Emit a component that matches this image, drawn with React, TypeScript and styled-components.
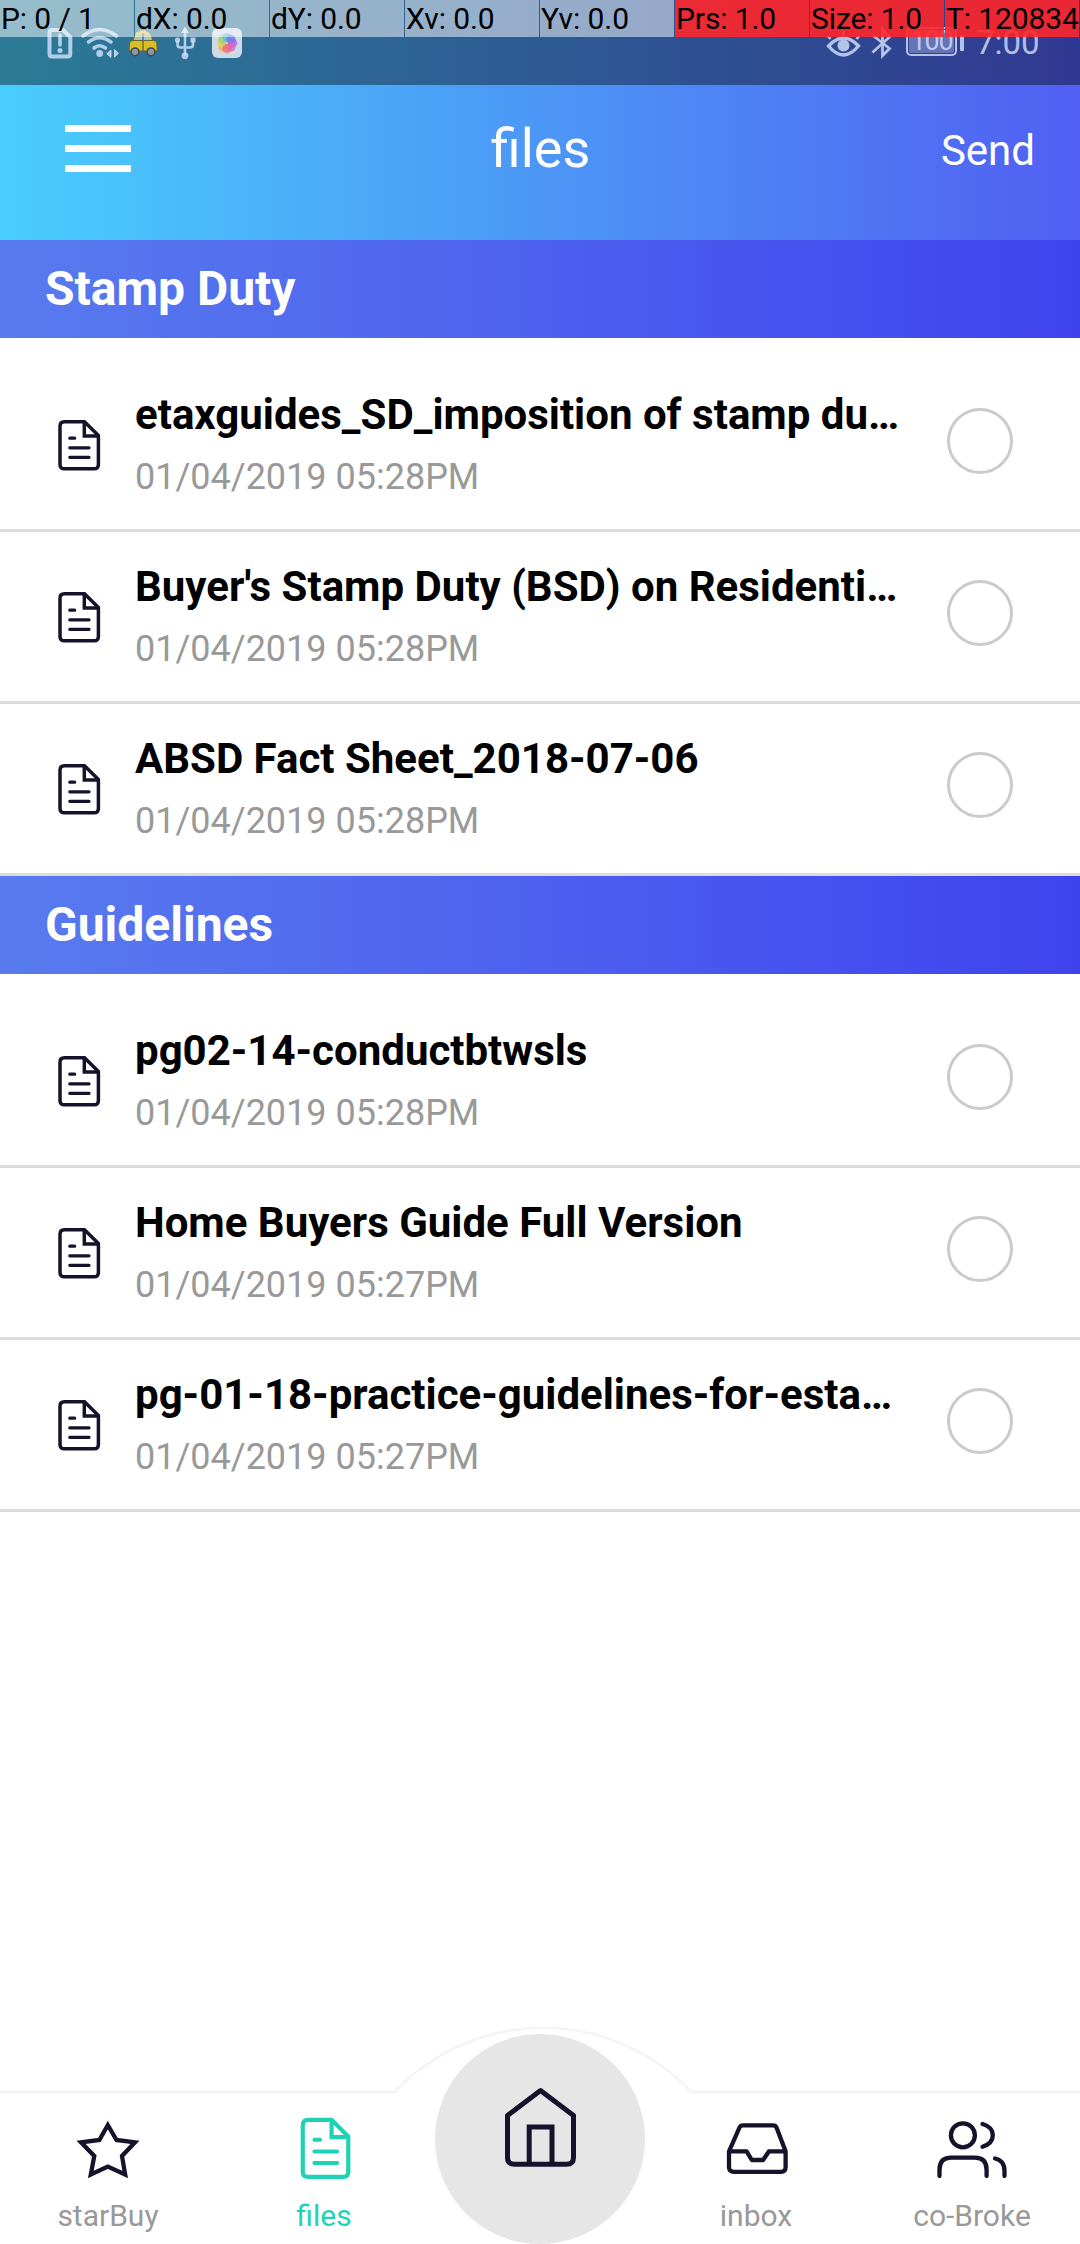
import React from "react";
import styled, { createGlobalStyle, css } from "styled-components";

const INK = "#17122b";
const TEAL = "#1fd2b4";
const GLYPH = "rgba(214, 226, 252, 0.8)";

const GlobalStyle = createGlobalStyle`
  * { box-sizing: border-box; }
  body { margin: 0; background: #fff; }
  body, button { font-family: Roboto, "Liberation Sans", sans-serif; }
`;

const Screen = styled.div`
  position: relative;
  display: flex;
  flex-direction: column;
  width: 1080px;
  height: 2244px;
  overflow: hidden;
  background: #fff;
`;

/* ---------- pointer debug strip ---------- */

const DebugStrip = styled.div`
  position: absolute;
  top: 0;
  left: 0;
  z-index: 2;
  display: grid;
  grid-template-columns: repeat(8, 134px);
  column-gap: 1px;
  width: 1080px;
  height: 37px;
`;

const DebugCell = styled.div<{ $hot?: boolean }>`
  padding-left: 1px;
  overflow: hidden;
  white-space: nowrap;
  font-size: 30px;
  line-height: 37px;
  letter-spacing: -0.1px;
  color: #000;
  background: ${(p) => (p.$hot ? "rgba(255, 38, 42, 0.9)" : "rgba(255, 255, 255, 0.5)")};
`;

/* ---------- header ---------- */

const Header = styled.header`
  display: flex;
  flex-direction: column;
  flex: none;
  height: 240px;
  background: linear-gradient(90deg, #49cefc 0%, #4c97f6 50%, #515ff2 100%);
`;

const StatusBar = styled.div`
  display: flex;
  justify-content: space-between;
  height: 85px;
  padding: 26px 41px 0 46px;
  background: rgba(0, 0, 0, 0.4);
`;

const StatusGroup = styled.div`
  display: flex;
  align-items: flex-start;
  height: 34px;
`;

const StatusGlyph = styled.svg<{ $w: number; $after: number }>`
  display: block;
  flex: none;
  width: ${(p) => p.$w}px;
  height: 34px;
  margin-right: ${(p) => p.$after}px;
`;

const Battery = styled.span`
  display: flex;
  justify-content: center;
  width: 51px;
  height: 29px;
  margin: 1px 3px 0 0;
  border: 2px solid ${GLYPH};
  border-radius: 5px;
  background: linear-gradient(rgba(200, 212, 245, 0.35), rgba(200, 212, 245, 0.35)) content-box;
  padding: 1px;
  font-size: 27px;
  line-height: 23px;
  letter-spacing: -1.4px;
  color: ${GLYPH};
`;

const BatteryNub = styled.span`
  width: 4px;
  height: 16px;
  margin: 9px 12px 0 0;
  border-radius: 1px;
  background: ${GLYPH};
`;

const Clock = styled.span`
  width: 63px;
  font-size: 33px;
  line-height: 34px;
  color: ${GLYPH};
`;

const Toolbar = styled.div`
  display: grid;
  grid-template-columns: 1fr auto 1fr;
  height: 155px;
  padding: 0 45px 0 64px;
`;

const MenuButton = styled.button`
  display: flex;
  flex-direction: column;
  gap: 13px;
  width: 67px;
  height: 47px;
  margin-top: 40px;
  padding: 0;
  border: 0;
  background: none;
`;

const MenuBar = styled.span`
  width: 66px;
  height: 7px;
  margin-left: 1px;
  background: #fff;
`;

const Title = styled.h1`
  margin: 32px 0 0;
  padding-right: 18px;
  font-size: 54px;
  font-weight: 400;
  line-height: 64px;
  color: #fff;
`;

const SendButton = styled.button`
  justify-self: end;
  align-self: start;
  margin-top: 41px;
  padding: 0;
  border: 0;
  background: none;
  font-size: 42px;
  line-height: 49px;
  color: #fff;
`;

/* ---------- file list ---------- */

const List = styled.main`
  flex: 1;
`;

const SectionTitle = styled.h2`
  height: 98px;
  margin: 0;
  padding-left: 45px;
  font-size: 48px;
  font-weight: 700;
  line-height: 98px;
  color: #fff;
  background: linear-gradient(90deg, #587bee 0%, #4d60ef 50%, #3f43ee 100%);
`;

const Rows = styled.ul`
  margin: 0;
  padding: 22px 0 0;
  list-style: none;
`;

const Row = styled.li`
  display: grid;
  grid-template-columns: 42px 777px 66px;
  column-gap: 35px;
  height: 172px;
  padding-left: 58px;
  border-bottom: 3px solid #dcdcdc;
`;

const FileText = styled.div`
  display: flex;
  flex-direction: column;
  gap: 17px;
  padding-top: 30px;
`;

const FileName = styled.span`
  overflow: hidden;
  white-space: nowrap;
  font-size: 42px;
  font-weight: 700;
  line-height: 49px;
  color: #000;
`;

const FileDate = styled.time`
  font-size: 36px;
  line-height: 42px;
  color: #999;
`;

const RowIcon = styled.svg`
  display: block;
  width: 43px;
  height: 51px;
  margin-top: 60px;
`;

const Radio = styled.button`
  width: 66px;
  height: 66px;
  margin: 48px 0 0;
  padding: 0;
  border: 3px solid #cbcbcb;
  border-radius: 50%;
  background: #fff;
`;

/* ---------- bottom navigation ---------- */

const NavBar = styled.nav`
  position: relative;
  display: grid;
  grid-template-columns: repeat(5, 216px);
  flex: none;
  height: 217px;
`;

const NavOutline = styled.svg`
  position: absolute;
  inset: 0;
  width: 1080px;
  height: 217px;
`;

const navItem = css`
  position: relative;
  display: flex;
  flex-direction: column;
  align-items: center;
`;

const Tab = styled.a<{ $active?: boolean }>`
  ${navItem}
  gap: 16px;
  padding-top: 91px;
  font-size: 30px;
  line-height: 35px;
  color: ${(p) => (p.$active ? TEAL : "#999")};
`;

const TabIcon = styled.svg`
  display: block;
  width: 72px;
  height: 64px;
  overflow: visible;
`;

const HomeTab = styled.a`
  ${navItem}
  justify-content: center;
  justify-self: center;
  align-self: end;
  width: 210px;
  height: 210px;
  border-radius: 50%;
  background: #e6e6e6;
`;

const HomeIcon = styled.svg`
  display: block;
  width: 74px;
  height: 82px;
  margin-bottom: 24px;
`;

const FileShape = ({ color }: { color: string }) => (
  <g fill="none" stroke={color} strokeWidth="3.5" strokeLinejoin="round" strokeLinecap="round">
    <path d="M6.5 1.8H26.5L40.4 15.6V44.5Q40.4 48.8 36 48.8H6.5Q2 48.8 2 44.5V6.3Q2 1.8 6.5 1.8Z" />
    <path d="M26.3 2V16H40" strokeLinejoin="miter" />
    <path d="M11.8 18.2H16.6M11.8 27.8H31M11.8 37.3H31" strokeWidth="3.3" />
  </g>
);

const FileIcon = () => (
  <RowIcon viewBox="0 0 43 51">
    <FileShape color={INK} />
  </RowIcon>
);

const stroke = {
  fill: "none",
  stroke: INK,
  strokeWidth: 4.3,
  strokeLinejoin: "round",
  strokeLinecap: "round",
} as const;

const debugCells: [string, boolean][] = [
  ["P: 0 / 1", false],
  ["dX: 0.0", false],
  ["dY: 0.0", false],
  ["Xv: 0.0", false],
  ["Yv: 0.0", false],
  ["Prs: 1.0", true],
  ["Size: 1.0", true],
  ["T: 120834", true],
];

const sections = [
  {
    title: "Stamp Duty",
    files: [
      ["etaxguides_SD_imposition of stamp du…", "01/04/2019 05:28PM"],
      ["Buyer's Stamp Duty (BSD) on Residenti…", "01/04/2019 05:28PM"],
      ["ABSD Fact Sheet_2018-07-06", "01/04/2019 05:28PM"],
    ],
  },
  {
    title: "Guidelines",
    files: [
      ["pg02-14-conductbtwsls", "01/04/2019 05:28PM"],
      ["Home Buyers Guide Full Version", "01/04/2019 05:27PM"],
      ["pg-01-18-practice-guidelines-for-esta…", "01/04/2019 05:27PM"],
    ],
  },
];

const petals = ["#f2a64b", "#e9d25a", "#8fd07a", "#59b9e0", "#5d7cf0", "#9a63ea", "#d765cf", "#ee6b77"];

const StatusIconsLeft = () => (
  <StatusGroup>
    <StatusGlyph $w={28} $after={6} viewBox="46 26 28 34">
      <path d="M52 30H63L70.300 37V54Q70.300 56.500 67.800 56.500H52Q49.500 56.500 49.500 54V32.500Q49.500 30 52 30Z" fill="none" stroke={GLYPH} strokeWidth="4" />
      <path d="M60 35V45" stroke={GLYPH} strokeWidth="3.600" strokeLinecap="round" />
      <circle cx="60" cy="50.500" r="2.500" fill={GLYPH} />
    </StatusGlyph>
    <StatusGlyph $w={40} $after={6} viewBox="80 26 40 34">
      <g fill="none" stroke={GLYPH} strokeWidth="3.600" strokeLinecap="round">
        <path d="M83 36Q99.500 23 116.500 36" />
        <path d="M88.500 42Q99.500 33.500 111 42" />
        <path d="M94 48Q99.500 43.500 105.500 48" />
      </g>
      <circle cx="99.700" cy="53.500" r="3.400" fill={GLYPH} />
      <path d="M111 50V57.500L106.800 53.700ZM114.500 49.500L118.500 53.300L114.500 57Z" fill={GLYPH} stroke={GLYPH} strokeWidth="1" />
    </StatusGlyph>
    <StatusGlyph $w={34} $after={14} viewBox="126 26 34 34">
      <path d="M134.500 41L136.500 34Q137 32.500 139 32.500H146Q148 32.500 149 34L151.500 41Z" fill="#9fc3cf" stroke="#e0c52c" strokeWidth="2" />
      <path d="M139.500 31.500H146" stroke="#f0cf3a" strokeWidth="2" />
      <path d="M129.500 43Q130 40.500 133 40.500H153.500Q156.500 40.500 156.800 43L157.200 51H129Z" fill="#d9bd24" stroke="#6c6636" strokeWidth="1" />
      <path d="M143 33V51M127.500 51.500H132M155 51.500H159" stroke="#5c5b3c" strokeWidth="1.200" />
      <g fill="#8b9a9d" stroke="#40494e" strokeWidth="1.500">
        <circle cx="135" cy="51.800" r="3.900" />
        <circle cx="151" cy="51.800" r="3.900" />
      </g>
    </StatusGlyph>
    <StatusGlyph $w={24} $after={14} viewBox="174 26 24 34">
      <path d="M185 30V55M177.500 41V44.500Q177.500 47.500 180.500 47.500H190Q193 47.500 193 44.500V41" fill="none" stroke={GLYPH} strokeWidth="2.600" />
      <path d="M185 26.500L189 33H181Z" fill={GLYPH} />
      <circle cx="177.500" cy="40" r="2.600" fill={GLYPH} />
      <circle cx="185" cy="55.800" r="3.400" fill={GLYPH} />
      <rect x="190.500" y="37.500" width="5" height="5" fill={GLYPH} />
    </StatusGlyph>
    <StatusGlyph $w={30} $after={0} viewBox="212 26 30 34">
      <rect x="212" y="28" width="30" height="30" rx="6" fill="#cdd9e6" />
      {petals.map((fill, i) => (
        <circle key={fill} cx="227" cy="37.5" r="4.600" fill={fill} opacity="0.8" transform={`rotate(${i * 45 + 225} 227 43)`} />
      ))}
    </StatusGlyph>
  </StatusGroup>
);

const StatusIconsRight = () => (
  <StatusGroup>
    <StatusGlyph $w={36} $after={10} viewBox="824 26 36 34">
      <path d="M827.500 46Q842.500 30 857.500 46Q842.500 64 827.500 46Z" fill="none" stroke={GLYPH} strokeWidth="3.400" />
      <circle cx="842.500" cy="45.500" r="6" fill={GLYPH} />
      <path d="M829.500 39L827 36M842.500 35V31M855.500 39L858 36" stroke={GLYPH} strokeWidth="2.600" />
    </StatusGlyph>
    <StatusGlyph $w={22} $after={13} viewBox="870 26 22 34">
      <path d="M871.500 52.500L888.500 37L881.500 29V55.500L888.500 48.500L871.500 35" fill="none" stroke={GLYPH} strokeWidth="2.800" />
    </StatusGlyph>
    <Battery>100</Battery>
    <BatteryNub />
    <Clock>7:00</Clock>
  </StatusGroup>
);

export default function App() {
  return (
    <>
      <GlobalStyle />
      <Screen>
        <DebugStrip>
          {debugCells.map(([label, hot]) => (
            <DebugCell key={label} $hot={hot}>{label}</DebugCell>
          ))}
        </DebugStrip>

        <Header>
          <StatusBar>
            <StatusIconsLeft />
            <StatusIconsRight />
          </StatusBar>
          <Toolbar>
            <MenuButton>
              <MenuBar />
              <MenuBar />
              <MenuBar />
            </MenuButton>
            <Title>files</Title>
            <SendButton>Send</SendButton>
          </Toolbar>
        </Header>

        <List>
          {sections.map((section) => (
            <section key={section.title}>
              <SectionTitle>{section.title}</SectionTitle>
              <Rows>
                {section.files.map(([name, date]) => (
                  <Row key={name}>
                    <FileIcon />
                    <FileText>
                      <FileName>{name}</FileName>
                      <FileDate>{date}</FileDate>
                    </FileText>
                    <Radio />
                  </Row>
                ))}
              </Rows>
            </section>
          ))}
        </List>

        <NavBar>
          <NavOutline viewBox="0 0 1080 217">
            <path d="M0 65H394.500A204 204 0 0 1 691.500 65H1080" fill="none" stroke="#f4f4f4" strokeWidth="2.500" />
          </NavOutline>
          <Tab>
            <TabIcon viewBox="0 0 72 64">
              <path {...stroke} strokeLinejoin="miter" d="M35.800 7L44.500 22L63 24.300L50 38L53.200 56.500L35.800 48.500L18.800 56.500L22.300 38L9 24.300L27.400 22Z" />
            </TabIcon>
            starBuy
          </Tab>
          <Tab $active>
            <TabIcon viewBox="0 0 72 64">
              <g transform="translate(12.400 -0.300) scale(1.185 1.212)">
                <FileShape color={TEAL} />
              </g>
            </TabIcon>
            files
          </Tab>
          <HomeTab>
            <HomeIcon viewBox="503 2086 74 82">
              <path {...stroke} strokeWidth={5} d="M540.500 2090.500L573.500 2115.500V2157.500Q573.500 2164.300 566.500 2164.300H514.500Q507.500 2164.300 507.500 2157.500V2115.500Z" />
              <path {...stroke} strokeWidth={5} strokeLinejoin="miter" d="M529.200 2163V2127H552V2163" />
            </HomeIcon>
          </HomeTab>
          <Tab>
            <TabIcon viewBox="0 0 72 64">
              <path {...stroke} d="M9 33.300L19.500 9.500Q20.500 7.300 23 7.300H53Q55.500 7.300 56.500 9.500L65.600 33.300V49Q65.600 53.800 61 53.800H14Q9 53.800 9 49ZM9 33.300H26.600L31.800 42H43.100L49 33.300H65.600" />
            </TabIcon>
            inbox
          </Tab>
          <Tab>
            <TabIcon viewBox="0 0 72 64">
              <circle {...stroke} cx="26.900" cy="17.300" r="12" />
              <path {...stroke} d="M46.500 6Q56.800 9 56.800 17.300T46.500 28.700M3.500 58V52Q3.500 39.700 15 39.700H39Q50.600 39.700 50.600 52V58M59 40.500Q68.500 42.500 68.500 53V58" />
            </TabIcon>
            co-Broke
          </Tab>
        </NavBar>
      </Screen>
    </>
  );
}
